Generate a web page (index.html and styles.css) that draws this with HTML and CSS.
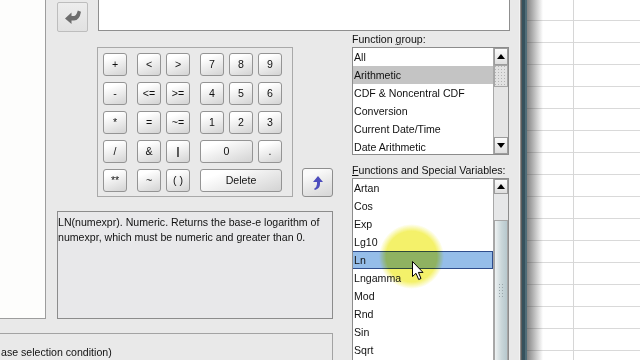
FILE: index.html
```html
<!DOCTYPE html>
<html lang="en">
<head>
<meta charset="UTF-8">
<title>Compute Variable</title>
<link rel="stylesheet" href="styles.css">
</head>
<body>
<div class="screen">
    <div class="dialog">
        <div class="varlist"></div>

        <button class="move-btn" disabled>
            <svg width="16" height="14" viewBox="0 0 16 14"><path d="M0 8.5 L6.5 2.5 L6.5 6 L9 6 Q11 6 12.3 2 L12.8 0.5 L16 1.8 Q14.5 10.5 9 10.5 L6.5 10.5 L6.5 14 Z" fill="#6d6d6d"/></svg>
        </button>

        <div class="expr"></div>

        <div class="funcs">
            <div class="label">Function <u>g</u>roup:</div>
            <div class="listbox group-list">
                <div class="items">
                    <div class="item">All</div>
                    <div class="item current">Arithmetic</div>
                    <div class="item">CDF &amp; Noncentral CDF</div>
                    <div class="item">Conversion</div>
                    <div class="item">Current Date/Time</div>
                    <div class="item">Date Arithmetic</div>
                </div>
                <div class="sb">
                    <div class="sb-btn"><svg width="8" height="5" viewBox="0 0 8 5"><path d="M0 5 L4 0 L8 5 Z"/></svg></div>
                    <div class="sb-thumb grey"></div>
                    <div class="sb-track"></div>
                    <div class="sb-btn"><svg width="8" height="5" viewBox="0 0 8 5"><path d="M0 0 L8 0 L4 5 Z"/></svg></div>
                </div>
            </div>

            <div class="label second"><u>F</u>unctions and Special Variables:</div>
            <div class="listbox fn-list">
                <div class="items">
                    <div class="item">Artan</div>
                    <div class="item">Cos</div>
                    <div class="item">Exp</div>
                    <div class="item">Lg10</div>
                    <div class="item selected">Ln</div>
                    <div class="item">Lngamma</div>
                    <div class="item">Mod</div>
                    <div class="item">Rnd</div>
                    <div class="item">Sin</div>
                    <div class="item">Sqrt</div>
                </div>
                <div class="sb">
                    <div class="sb-btn short"><svg width="8" height="5" viewBox="0 0 8 5"><path d="M0 5 L4 0 L8 5 Z"/></svg></div>
                    <div class="sb-gap"></div>
                    <div class="sb-thumb blue"><span class="grip"></span></div>
                </div>
            </div>
        </div>

        <div class="keypad">
            <div class="keys k1">
                <button>+</button>
                <button>-</button>
                <button>*</button>
                <button>/</button>
                <button>**</button>
            </div>
            <div class="keys k2">
                <button>&lt;</button>
                <button>&gt;</button>
                <button>&lt;=</button>
                <button>&gt;=</button>
                <button>=</button>
                <button>~=</button>
                <button>&amp;</button>
                <button class="bar">|</button>
                <button>~</button>
                <button>( )</button>
            </div>
            <div class="keys k3">
                <button>7</button>
                <button>8</button>
                <button>9</button>
                <button>4</button>
                <button>5</button>
                <button>6</button>
                <button>1</button>
                <button>2</button>
                <button>3</button>
                <button class="zero">0</button>
                <button>.</button>
                <button class="del">Delete</button>
            </div>
        </div>

        <button class="up-btn">
            <svg width="11" height="14" viewBox="0 0 11 14"><path d="M6 0 L11 6 L8 6 L8 8 Q8 12.5 3 14 L2 13 Q5 11 5 8 L5 6 L1 6 Z" fill="#4d4dbd"/></svg>
        </button>

        <div class="desc">LN(numexpr). Numeric. Returns the base-e logarithm of<br>numexpr, which must be numeric and greater than 0.</div>

        <div class="ifbox">ase selection condition)</div>
    </div>

    <div class="frame"></div>
    <div class="sheet"></div>

    <!-- pointer highlight from the screen recording -->
    <div class="spot"></div>
    <svg class="cursor" width="13" height="20" viewBox="0 0 13 20"><path d="M0.5 0.5 L0.5 15.5 L4 12.3 L6.7 18.5 L9 17.5 L6.4 11.4 L11 11.4 Z" fill="#fff" stroke="#000" stroke-width="1" stroke-linejoin="round"/></svg>
</div>
</body>
</html>
```

FILE: styles.css
```css
* {
    box-sizing: border-box;
    margin: 0;
    padding: 0;
}
body {
    width: 640px;
    height: 360px;
    overflow: hidden;
    font-family: "Liberation Sans", Arial, sans-serif;
    font-size: 10.6px;
    color: #111;
    background: #fff;
}
button {
    font: inherit;
    color: inherit;
}
.screen {
    position: relative;
    display: flex;
    height: 360px;
}

/* dialog */
.dialog {
    width: 520px;
    flex: none;
    background: #e9e9e9;
    display: grid;
    grid-template-columns: 46px 11px 31px 9px 196px 9px 31px 19px 157px 11px;
    grid-template-rows: 32px 15px 150px 14px 108px 14px 1fr;
    border-right: 1px solid #f3f3f3;
}
.varlist {
    grid-column: 1;
    grid-row: 1 / 6;
    background: #fdfdfc;
    border-right: 1px solid #9d9d9d;
    border-bottom: 1px solid #9d9d9d;
}
.move-btn {
    grid-column: 3;
    grid-row: 1;
    align-self: end;
    height: 30px;
    border: 1px solid #bdbdbd;
    border-radius: 2px;
    background: linear-gradient(#ededed, #e1e1e1);
    display: flex;
    align-items: center;
    justify-content: center;
}
.expr {
    grid-column: 5 / 10;
    grid-row: 1;
    height: 31px;
    margin-left: 1px;
    margin-right: -1px;
    background: #fff;
    border: 1px solid #8f8f8f;
    border-top: none;
}

/* function lists */
.funcs {
    grid-column: 9;
    grid-row: 2 / 8;
    display: flex;
    flex-direction: column;
    overflow: hidden;
}
.label {
    height: 15px;
    line-height: 15px;
    white-space: nowrap;
}
.label.second {
    margin-top: 8px;
}
.listbox {
    display: flex;
    background: #fff;
    border: 1px solid #8c8c8c;
    overflow: hidden;
}
.group-list {
    height: 108px;
    flex: none;
}
.fn-list {
    flex: 1;
    border-bottom: none;
}
.items {
    flex: 1;
    overflow: hidden;
}
.item {
    height: 18px;
    line-height: 18px;
    padding-left: 1px;
    white-space: nowrap;
}
.item.current {
    background: #c4c4c4;
}
.item.selected {
    background: #95bde9;
    border: 1px solid #2f4d8c;
    border-left: none;
    line-height: 16px;
}
.sb {
    width: 15px;
    flex: none;
    display: flex;
    flex-direction: column;
    background: #e5e5e5;
    border-left: 1px solid #a8a8a8;
}
.sb-btn {
    height: 17px;
    flex: none;
    border: 1px solid #9c9c9c;
    background: linear-gradient(#fbfbfb, #dedede);
    display: flex;
    align-items: center;
    justify-content: center;
}
.sb-btn.short {
    height: 15px;
}
.sb-thumb {
    display: flex;
    align-items: center;
    justify-content: center;
    border: 1px solid #a6a6a6;
}
.sb-thumb.grey {
    height: 22px;
    background:
        radial-gradient(circle, #b4b4b4 0.6px, transparent 0.9px) 2px 2px / 3px 3px,
        #e2e2e2;
}
.sb-thumb.blue {
    flex: 1;
    border-bottom: none;
    background: linear-gradient(to right, #eef2f3, #c9d6d9 55%, #b7c8cd);
}
.sb-track {
    flex: 1;
}
.sb-gap {
    height: 26px;
    flex: none;
    background: #e6e7e8;
}
.grip {
    width: 7px;
    height: 16px;
    background: radial-gradient(circle, #9aa6aa 0.6px, transparent 0.9px) 0 0 / 3px 3px;
}

/* keypad */
.keypad {
    grid-column: 5;
    grid-row: 3;
    border: 1px solid #a9a9a9;
    padding: 5px 0 0 5px;
    display: flex;
    gap: 10px;
    align-items: flex-start;
}
.keys {
    display: grid;
    grid-auto-rows: 23px;
    gap: 6px 5px;
}
.k1 { grid-template-columns: 24px; }
.k2 { grid-template-columns: repeat(2, 24px); }
.k3 { grid-template-columns: repeat(3, 24px); }
.keys button {
    border: 1px solid #949494;
    border-radius: 3px;
    background: linear-gradient(160deg, #ffffff 20%, #e9e9e9 60%, #d3d3d3);
    cursor: pointer;
    line-height: 21px;
}
.keys .zero { grid-column: span 2; }
.keys .del { grid-column: span 3; }
.keys .bar { font-weight: bold; }

.up-btn {
    grid-column: 7;
    grid-row: 3;
    align-self: end;
    height: 29px;
    border: 1px solid #8e8e8e;
    border-radius: 3px;
    background: linear-gradient(160deg, #fafafa 20%, #e6e6e6 60%, #d6d6d6);
    display: flex;
    align-items: center;
    justify-content: center;
}

/* description */
.desc {
    grid-column: 3 / 8;
    grid-row: 5;
    border: 1px solid #8c8c8c;
    background: #e8e8ea;
    padding-top: 3px;
    line-height: 15px;
    white-space: nowrap;
}
.ifbox {
    grid-column: 1 / 8;
    grid-row: 7;
    border-top: 1px solid #a3a3a3;
    border-right: 1px solid #a3a3a3;
    padding: 12px 0 0 1px;
    line-height: 13px;
    white-space: nowrap;
    overflow: hidden;
}

/* window edge and spreadsheet behind */
.frame {
    width: 7px;
    flex: none;
    background: linear-gradient(to right, #8c8c8c 0 1px, #5d5d5d 1px 2px, #36515c 2px 5px, #4f6c77 5px 7px);
}
.sheet {
    flex: 1;
    background:
        linear-gradient(to right, rgba(50, 50, 50, 0.6), rgba(120, 120, 120, 0) 16px),
        linear-gradient(to right, transparent 46px, #d6d6d6 46px 47px, transparent 47px),
        linear-gradient(to bottom, transparent 20px, #d9d9d9 20px 21px, transparent 21px) 0 0 / 100% 22px,
        #fff;
}

/* recording overlays */
.spot {
    position: absolute;
    left: 379px;
    top: 224px;
    width: 65px;
    height: 65px;
    border-radius: 50%;
    background: radial-gradient(circle closest-side, #f4f16a 78%, rgba(244, 241, 106, 0) 100%);
    mix-blend-mode: multiply;
}
.cursor {
    position: absolute;
    left: 412px;
    top: 261px;
}
```
